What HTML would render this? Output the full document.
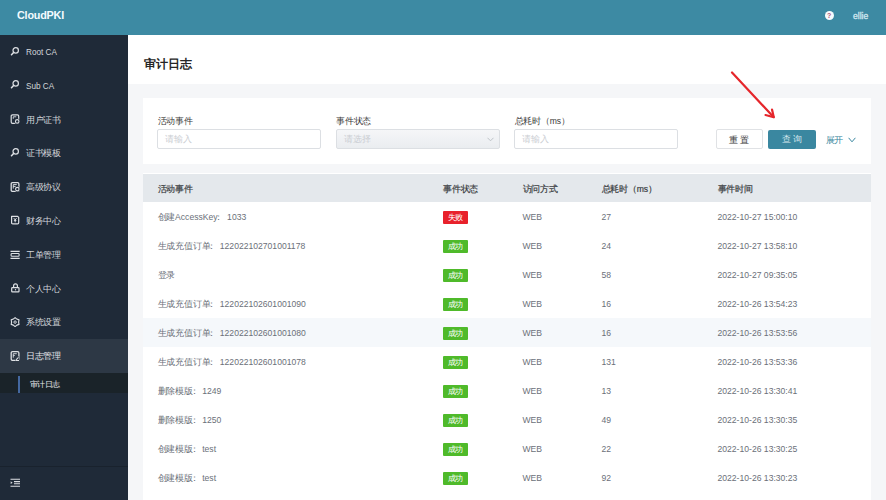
<!DOCTYPE html>
<html><head><meta charset="utf-8">
<style>
*{margin:0;padding:0;box-sizing:border-box}
html,body{width:886px;height:500px;overflow:hidden;background:#f5f6f8;font-family:"Liberation Sans",sans-serif}
.abs{position:absolute}
#hdr{left:0;top:0;width:886px;height:35px;background:#3d8aa3}
#logo{left:17px;top:8px;font-size:10.8px;font-weight:bold;color:#f4fbff;line-height:14px;letter-spacing:-0.2px}
#help{left:824.5px;top:10.5px;width:9.5px;height:9.5px;border-radius:50%;background:#f7fbfd;color:#b2587a;font-size:7px;font-weight:bold;text-align:center;line-height:9.5px}
#user{left:853px;top:9.5px;font-size:8.6px;line-height:12px;color:#d3e9f1;-webkit-text-stroke:0.3px #d3e9f1}
#side{left:0;top:35px;width:128px;height:465px;background:#1f2a38}
.mi{position:absolute;left:0;width:128px;height:33.8px}
.mi .t{position:absolute;left:26px;top:1px;line-height:33.8px;font-size:8.2px;color:#d3d6da}

.mi.act{background:#2d3845}
#sub{left:0;top:373px;width:128px;height:20px;background:#1a2329}
#subbar{left:18.2px;top:376px;width:2px;height:17px;background:#4468a0}
#subt{left:30px;top:375px;line-height:20px;font-size:7.4px;color:#e6e8eb}
#div{left:0;top:466px;width:128px;height:1px;background:#19222d}
#titlebar{left:128px;top:35px;width:758px;height:49px;background:#fff}
#title{left:144px;top:57px;font-size:12.2px;line-height:14px;font-weight:bold;color:#262626}
#card{left:143px;top:98px;width:728px;height:66px;background:#fff}
.lbl{position:absolute;top:115px;line-height:12px;font-size:8.6px;color:#3a3a3a}
.inp{position:absolute;top:129.2px;height:20px;border:1px solid #dcdfe3;border-radius:2px;background:#fff}
.ph{position:absolute;left:7px;top:0;line-height:18px;font-size:8px;color:#cbced3}
.sel{background:linear-gradient(#f5f6f8,#eaedf0)}
.btn{position:absolute;top:129.5px;height:20px;border-radius:2px;text-align:center;line-height:20px;font-size:8.6px;letter-spacing:0;text-indent:2.4px}
#reset{left:715.5px;top:129.2px;width:47.5px;border:1px solid #e0e2e5;background:#fff;color:#3a3a3a}
#query{left:768px;top:130px;height:18.8px;line-height:18.8px;width:48px;background:#3a87a0;color:#d5e7ee}
#expand{left:825.5px;top:133px;line-height:14px;font-size:8.6px;color:#3a87a0}
#tbl{left:143px;top:173px;width:728px;height:327px;background:#fff}
#th{left:143px;top:174px;width:728px;height:28px;background:#e4e8ec}
.c{position:absolute;white-space:nowrap;font-size:8.6px}
.th{top:174.5px;line-height:28px;color:#3a3d42;-webkit-text-stroke:0.2px #3a3d42}
.td{line-height:29px;margin-top:0.8px;color:#6b7079}
.hov{left:143px;width:728px;height:29px;background:#f5f8fb}
.tag{position:absolute;left:443px;width:25px;height:13px;border-radius:1px;color:#fff;font-size:7px;line-height:13px;text-align:center}
.ok{background:#4fba2a}
.fail{background:#e8212b}
.k{display:inline-block;white-space:nowrap;text-indent:0;font-size:9px;--ls:-0.2px;letter-spacing:var(--ls);width:calc(var(--n)*(1em + var(--ls)))}
.cl{display:inline-block;white-space:nowrap;width:12.7px;margin-left:-3.2px;font-size:9px}
.mi .k{--ls:-0.5px}
#subt .k{font-size:8px;--ls:-0.7px}
#title .k{font-size:12px;--ls:0px}
.tag .k{font-size:8px;--ls:-0.3px}
.btn .k{font-size:9px;--ls:2.4px}

</style></head><body>
<div id="hdr" class="abs"></div>
<div id="logo" class="abs">CloudPKI</div>
<div id="help" class="abs">?</div>
<div id="user" class="abs">ellie</div>

<div id="side" class="abs"></div>
<div class="mi" style="top:35.0px"><svg class="abs" style="left:9.5px;top:11.6px" width="10" height="10" viewBox="0 0 20 20"><circle cx="11.4" cy="6.8" r="5.4" fill="none" stroke="#dde0e4" stroke-width="2.4"/><path d="M7.6 10.6L3 15.4" stroke="#dde0e4" stroke-width="3.2" stroke-linecap="round"/></svg><span class="t">Root CA</span></div>
<div class="mi" style="top:68.8px"><svg class="abs" style="left:9.5px;top:11.5px" width="10" height="10" viewBox="0 0 20 20"><circle cx="11.4" cy="6.8" r="5.4" fill="none" stroke="#dde0e4" stroke-width="2.4"/><path d="M7.6 10.6L3 15.4" stroke="#dde0e4" stroke-width="3.2" stroke-linecap="round"/></svg><span class="t">Sub CA</span></div>
<div class="mi" style="top:102.6px"><svg class="abs" style="left:9.5px;top:11.4px" width="10" height="10" viewBox="0 0 20 20"><rect x="2.4" y="1.6" width="15" height="17" rx="2.6" fill="none" stroke="#dde0e4" stroke-width="2.4"/><path d="M6.5 5.6h6M6.5 5.6v4" stroke="#dde0e4" stroke-width="1.8" fill="none"/><circle cx="14.4" cy="14.8" r="5.6" fill="#1f2a38"/><circle cx="14.4" cy="14.8" r="3.5" fill="none" stroke="#dde0e4" stroke-width="2.2"/></svg><span class="t"><span class="k" style="--n:4">用户证书</span></span></div>
<div class="mi" style="top:136.4px"><svg class="abs" style="left:9.5px;top:12.1px" width="10" height="10" viewBox="0 0 20 20"><circle cx="11.4" cy="6.8" r="5.4" fill="none" stroke="#dde0e4" stroke-width="2.4"/><path d="M7.6 10.6L3 15.4" stroke="#dde0e4" stroke-width="3.2" stroke-linecap="round"/></svg><span class="t"><span class="k" style="--n:4">证书模板</span></span></div>
<div class="mi" style="top:170.2px"><svg class="abs" style="left:9.5px;top:11.8px" width="10" height="10" viewBox="0 0 20 20"><rect x="2.4" y="1.4" width="15.4" height="17.4" rx="2.4" fill="none" stroke="#dde0e4" stroke-width="2.6"/><path d="M6.5 5.2h7M6.5 8.8h5M6.5 5.2v8" stroke="#dde0e4" stroke-width="1.9" fill="none"/><circle cx="14.6" cy="14.2" r="5.6" fill="#1f2a38"/><circle cx="14.6" cy="14.2" r="3.5" fill="none" stroke="#dde0e4" stroke-width="2.2"/></svg><span class="t"><span class="k" style="--n:4">高级协议</span></span></div>
<div class="mi" style="top:204.0px"><svg class="abs" style="left:9.5px;top:11.4px" width="10" height="10" viewBox="0 0 20 20"><path d="M3.2 2.6H15.2L17.4 4.8V15.4Q17.4 17.8 15 17.8H5.6Q3.2 17.8 3.2 15.4Z" fill="none" stroke="#dde0e4" stroke-width="2.4" stroke-linejoin="round"/><path d="M7.6 6.2L10.3 10L13 6.2M10.3 10V14.6M7.8 11.2h5" stroke="#dde0e4" stroke-width="1.9" fill="none"/></svg><span class="t"><span class="k" style="--n:4">财务中心</span></span></div>
<div class="mi" style="top:237.8px"><svg class="abs" style="left:9.5px;top:11.9px" width="10" height="10" viewBox="0 0 20 20"><path d="M1 2.6h18.4M1 16.8h18.4" stroke="#dde0e4" stroke-width="2.4"/><rect x="2.2" y="7" width="16" height="5.4" rx="1.6" fill="none" stroke="#dde0e4" stroke-width="2.2"/></svg><span class="t"><span class="k" style="--n:4">工单管理</span></span></div>
<div class="mi" style="top:271.6px"><svg class="abs" style="left:9.5px;top:11.9px" width="10" height="10" viewBox="0 0 20 20"><path d="M7.2 9.2V5.6A3.8 3.8 0 0 1 14.8 5.6V9.2" fill="none" stroke="#dde0e4" stroke-width="2.4"/><rect x="3.4" y="9.2" width="14.6" height="8.6" rx="1.4" fill="none" stroke="#dde0e4" stroke-width="2.4"/><circle cx="11" cy="13.5" r="1.4" fill="#dde0e4"/></svg><span class="t"><span class="k" style="--n:4">个人中心</span></span></div>
<div class="mi" style="top:305.4px"><svg class="abs" style="left:9.5px;top:11.6px" width="10" height="10" viewBox="0 0 20 20"><path d="M10.20 1.20L6.70 4.14L2.41 5.70L3.20 10.20L2.41 14.70L6.70 16.26L10.20 19.20L13.70 16.26L17.99 14.70L17.20 10.20L17.99 5.70L13.70 4.14Z" fill="none" stroke="#dde0e4" stroke-width="2.3" stroke-linejoin="round"/><circle cx="10.2" cy="10.2" r="2.4" fill="none" stroke="#dde0e4" stroke-width="1.9"/></svg><span class="t"><span class="k" style="--n:4">系统设置</span></span></div>
<div class="mi act" style="top:339.2px"><svg class="abs" style="left:9.5px;top:11.8px" width="10" height="10" viewBox="0 0 20 20"><rect x="2.4" y="1.4" width="15.4" height="17.4" rx="2.6" fill="none" stroke="#dde0e4" stroke-width="2.6"/><path d="M6.5 5.4h7M6.5 5.4v8M6.5 9h3" stroke="#dde0e4" stroke-width="1.8" fill="none"/><rect x="10.5" y="11" width="8" height="9" fill="#2d3845"/><path d="M12 17.6L17 12.6" stroke="#dde0e4" stroke-width="2.2"/><path d="M10.8 19h7.2" stroke="#dde0e4" stroke-width="2"/></svg><span class="t" style="color:#e4e6ea"><span class="k" style="--n:4">日志管理</span></span></div>
<div id="sub" class="abs"></div>
<div id="subbar" class="abs"></div>
<div id="subt" class="abs"><span class="k" style="--n:4">审计日志</span></div>
<div id="div" class="abs"></div>
<svg class="abs" style="left:9.5px;top:477px" width="11" height="11" viewBox="0 0 22 22"><path d="M1 4.6h19M8 9.2h12M8 13.4h12M1 18.4h19" stroke="#dde0e4" stroke-width="2.2"/><path d="M1.4 8.6L5.2 11.3L1.4 14Z" fill="#dde0e4"/></svg>

<div id="titlebar" class="abs"></div>
<div id="title" class="abs"><span class="k" style="--n:4">审计日志</span></div>

<div id="card" class="abs"></div>
<div class="lbl" style="left:157.5px"><span class="k" style="--n:4">活动事件</span></div>
<div class="lbl" style="left:336px"><span class="k" style="--n:4">事件状态</span></div>
<div class="lbl" style="left:514.5px"><span class="k" style="--n:4">总耗时（</span>ms<span class="k" style="--n:1">）</span></div>
<div class="inp" style="left:157px;width:164px"><span class="ph"><span class="k" style="--n:3">请输入</span></span></div>
<div class="inp sel" style="left:336px;width:163.5px"><span class="ph"><span class="k" style="--n:3">请选择</span></span><svg class="abs" style="left:150px;top:6.5px" width="7" height="5" viewBox="0 0 7 5"><path d="M0.5 0.8L3.5 3.8L6.5 0.8" fill="none" stroke="#b9bdc3" stroke-width="0.9"/></svg></div>
<div class="inp" style="left:514px;width:163.5px"><span class="ph"><span class="k" style="--n:3">请输入</span></span></div>
<div id="reset" class="btn"><span class="k" style="--n:2">重置</span></div>
<div id="query" class="btn"><span class="k" style="--n:2">查询</span></div>
<div id="expand" class="abs"><span class="k" style="--n:2">展开</span> <svg style="vertical-align:middle;margin-left:3px;margin-top:-2px" width="8" height="6" viewBox="0 0 8 6"><path d="M0.6 0.8L4 4.8L7.4 0.8" fill="none" stroke="#3a87a0" stroke-width="1"/></svg></div>
<svg class="abs" style="left:720px;top:60px" width="70" height="70" viewBox="0 0 70 70"><path d="M12 12.5L53.5 57" stroke="#e5262b" stroke-width="2.2" stroke-linecap="round"/><path d="M45.5 55L53.8 57.2L52 49.5" fill="none" stroke="#e5262b" stroke-width="2.2" stroke-linecap="round" stroke-linejoin="round"/></svg>

<div id="tbl" class="abs"></div>
<div id="th" class="abs"></div>
<div class="c th" style="left:157.5px"><span class="k" style="--n:4">活动事件</span></div>
<div class="c th" style="left:443px"><span class="k" style="--n:4">事件状态</span></div>
<div class="c th" style="left:522.5px"><span class="k" style="--n:4">访问方式</span></div>
<div class="c th" style="left:601.5px"><span class="k" style="--n:4">总耗时（</span>ms<span class="k" style="--n:1">）</span></div>
<div class="c th" style="left:717.5px"><span class="k" style="--n:4">事件时间</span></div>
<div id="rows">
<div class="c td" style="left:157.5px;top:202px"><span class="k" style="--n:2">创建</span>AccessKey<span class="cl">：</span>1033</div>
<div class="tag fail" style="top:210.5px"><span class="k" style="--n:2">失败</span></div>
<div class="c td" style="left:522.5px;top:202px">WEB</div>
<div class="c td" style="left:601.5px;top:202px">27</div>
<div class="c td" style="left:717.5px;top:202px">2022-10-27 15:00:10</div>
<div class="c td" style="left:157.5px;top:231px"><span class="k" style="--n:6">生成充值订单</span><span class="cl">：</span>122022102701001178</div>
<div class="tag ok" style="top:239.5px"><span class="k" style="--n:2">成功</span></div>
<div class="c td" style="left:522.5px;top:231px">WEB</div>
<div class="c td" style="left:601.5px;top:231px">24</div>
<div class="c td" style="left:717.5px;top:231px">2022-10-27 13:58:10</div>
<div class="c td" style="left:157.5px;top:260px"><span class="k" style="--n:2">登录</span></div>
<div class="tag ok" style="top:268.5px"><span class="k" style="--n:2">成功</span></div>
<div class="c td" style="left:522.5px;top:260px">WEB</div>
<div class="c td" style="left:601.5px;top:260px">58</div>
<div class="c td" style="left:717.5px;top:260px">2022-10-27 09:35:05</div>
<div class="c td" style="left:157.5px;top:289px"><span class="k" style="--n:6">生成充值订单</span><span class="cl">：</span>122022102601001090</div>
<div class="tag ok" style="top:297.5px"><span class="k" style="--n:2">成功</span></div>
<div class="c td" style="left:522.5px;top:289px">WEB</div>
<div class="c td" style="left:601.5px;top:289px">16</div>
<div class="c td" style="left:717.5px;top:289px">2022-10-26 13:54:23</div>
<div class="abs hov" style="top:318px"></div>
<div class="c td" style="left:157.5px;top:318px"><span class="k" style="--n:6">生成充值订单</span><span class="cl">：</span>122022102601001080</div>
<div class="tag ok" style="top:326.5px"><span class="k" style="--n:2">成功</span></div>
<div class="c td" style="left:522.5px;top:318px">WEB</div>
<div class="c td" style="left:601.5px;top:318px">16</div>
<div class="c td" style="left:717.5px;top:318px">2022-10-26 13:53:56</div>
<div class="c td" style="left:157.5px;top:347px"><span class="k" style="--n:6">生成充值订单</span><span class="cl">：</span>122022102601001078</div>
<div class="tag ok" style="top:355.5px"><span class="k" style="--n:2">成功</span></div>
<div class="c td" style="left:522.5px;top:347px">WEB</div>
<div class="c td" style="left:601.5px;top:347px">131</div>
<div class="c td" style="left:717.5px;top:347px">2022-10-26 13:53:36</div>
<div class="c td" style="left:157.5px;top:376px"><span class="k" style="--n:4">删除模版</span><span class="cl">：</span>1249</div>
<div class="tag ok" style="top:384.5px"><span class="k" style="--n:2">成功</span></div>
<div class="c td" style="left:522.5px;top:376px">WEB</div>
<div class="c td" style="left:601.5px;top:376px">13</div>
<div class="c td" style="left:717.5px;top:376px">2022-10-26 13:30:41</div>
<div class="c td" style="left:157.5px;top:405px"><span class="k" style="--n:4">删除模版</span><span class="cl">：</span>1250</div>
<div class="tag ok" style="top:413.5px"><span class="k" style="--n:2">成功</span></div>
<div class="c td" style="left:522.5px;top:405px">WEB</div>
<div class="c td" style="left:601.5px;top:405px">49</div>
<div class="c td" style="left:717.5px;top:405px">2022-10-26 13:30:35</div>
<div class="c td" style="left:157.5px;top:434px"><span class="k" style="--n:4">创建模版</span><span class="cl">：</span>test</div>
<div class="tag ok" style="top:442.5px"><span class="k" style="--n:2">成功</span></div>
<div class="c td" style="left:522.5px;top:434px">WEB</div>
<div class="c td" style="left:601.5px;top:434px">22</div>
<div class="c td" style="left:717.5px;top:434px">2022-10-26 13:30:25</div>
<div class="c td" style="left:157.5px;top:463px"><span class="k" style="--n:4">创建模版</span><span class="cl">：</span>test</div>
<div class="tag ok" style="top:471.5px"><span class="k" style="--n:2">成功</span></div>
<div class="c td" style="left:522.5px;top:463px">WEB</div>
<div class="c td" style="left:601.5px;top:463px">92</div>
<div class="c td" style="left:717.5px;top:463px">2022-10-26 13:30:23</div>
</div>
</body></html>
